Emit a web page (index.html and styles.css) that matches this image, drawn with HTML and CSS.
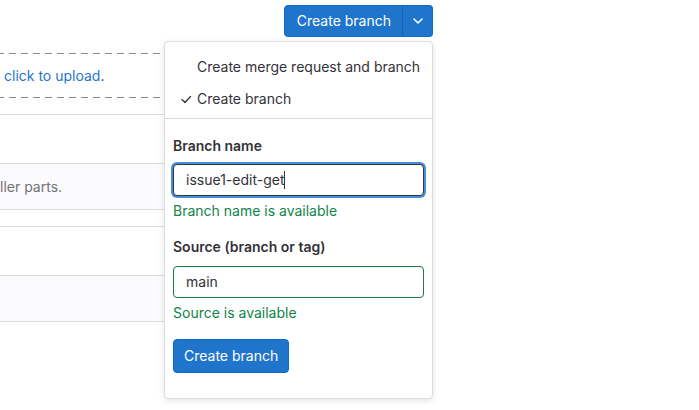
FILE: index.html
```html
<!DOCTYPE html>
<html lang="en">
<head>
<meta charset="utf-8">
<title>Create branch</title>
<link rel="stylesheet" href="styles.css">
</head>
<body>
<div class="page">
  <div class="toolbar">
    <div class="btn-group">
      <button class="btn btn-primary btn-main">Create branch</button>
      <button class="btn btn-primary btn-caret" aria-label="Toggle dropdown">
        <svg width="16" height="16" viewBox="0 0 16 16"><polyline points="4,6 8,10 12,6" fill="none" stroke="#fff" stroke-width="1.6" stroke-linecap="round" stroke-linejoin="round"/></svg>
      </button>
    </div>
  </div>

  <div class="content">
    <div class="dropzone"><span class="link">click to upload</span>.</div>
    <div class="rows">
      <div class="row row-tall"></div>
      <div class="row row-gray"><span class="muted">ller parts.</span></div>
      <div class="row row-short"></div>
      <div class="row row-tall"></div>
      <div class="row row-gray"></div>
      <div class="row row-end"></div>
    </div>
  </div>

  <div class="dropdown">
    <ul class="dropdown-list">
      <li class="dropdown-item"><span class="check-slot"></span>Create merge request and branch</li>
      <li class="dropdown-item"><span class="check-slot"><svg width="16" height="16" viewBox="0 0 16 16"><polyline points="1,8.5 4,11.5 9.5,5.5" fill="none" stroke="#333238" stroke-width="1.3" stroke-linecap="round" stroke-linejoin="round"/></svg></span>Create branch</li>
    </ul>
    <div class="divider"></div>
    <form class="branch-form">
      <div class="form-group">
        <div class="label">Branch name</div>
        <div class="input input-focus">issue1-edit-get<span class="text-caret"></span></div>
        <div class="feedback">Branch name is available</div>
      </div>
      <div class="form-group">
        <div class="label label-second">Source (branch or tag)</div>
        <div class="input input-valid">main</div>
        <div class="feedback">Source is available</div>
      </div>
      <button type="button" class="btn btn-primary btn-submit">Create branch</button>
    </form>
  </div>
</div>
</body>
</html>
```

FILE: styles.css
```css
* { box-sizing: border-box; }
html, body {
  margin: 0;
  padding: 0;
  background: #fff;
}
body {
  font-family: Inter, "Noto Sans", "Liberation Sans", sans-serif;
  font-size: 14px;
  line-height: 20px;
  color: #333238;
  overflow: hidden;
}
.page {
  position: relative;
  width: 699px;
  height: 410px;
}

/* top toolbar */
.toolbar {
  display: flex;
  justify-content: flex-end;
  padding: 5px 266px 0 0;
}
.btn-group {
  display: flex;
}
.btn {
  font-family: inherit;
  font-size: 14px;
  line-height: 20px;
  margin: 0;
  cursor: pointer;
  white-space: nowrap;
}
.btn-primary {
  background: #1f75cb;
  border: 1px solid #1068bf;
  color: #fff;
}
.btn-main {
  height: 32px;
  padding: 0 11px 0 12px;
  border-radius: 4px 0 0 4px;
}
.btn-caret {
  height: 32px;
  width: 31px;
  padding: 0;
  border-left: 1px solid #1462b0;
  border-radius: 0 4px 4px 0;
  display: flex;
  align-items: center;
  justify-content: center;
  margin-left: -1px;
}
.btn-caret svg { display: block; }

/* background content */
.content {
  width: 330px;
  margin-top: 16px;
}
.dropzone {
  height: 45px;
  display: flex;
  align-items: center;
  padding-left: 4px;
  background-image:
    repeating-linear-gradient(to right, #89888d 0 7px, transparent 7px 12px),
    repeating-linear-gradient(to right, #89888d 0 7px, transparent 7px 12px);
  background-size: 100% 1px, 100% 1px;
  background-position: -3px 0, -3px 100%;
  background-repeat: no-repeat;
}
.link { color: #1f75cb; }
.rows { margin-top: 16px; }
.row {
  border-top: 1px solid #dcdcde;
}
.row-tall { height: 49px; }
.row-gray {
  height: 46px;
  background: #fbfafd;
  display: flex;
  align-items: center;
}
.row-short { height: 17px; }
.row-end { height: 1px; }
.muted { color: #737278; }

/* dropdown */
.dropdown {
  position: absolute;
  top: 41px;
  left: 164px;
  width: 269px;
  background: #fff;
  border: 1px solid #dcdcde;
  border-radius: 4px;
  box-shadow: 0 2px 6px rgba(5, 5, 6, 0.1);
}
.dropdown-list {
  list-style: none;
  margin: 0;
  padding: 9px 0 3px;
}
.dropdown-item {
  height: 32px;
  display: flex;
  align-items: center;
  padding-left: 16px;
}
.check-slot {
  width: 16px;
  height: 16px;
  flex: none;
}
.check-slot svg { display: block; }
.divider {
  height: 1px;
  background: #dcdcde;
}
.branch-form {
  padding: 17px 8px 25px;
}
.form-group {
  margin-bottom: 16px;
}
.label {
  font-weight: 600;
  margin-bottom: 8px;
}
.label-second { margin-bottom: 9px; }
.input {
  height: 32px;
  border-radius: 4px;
  padding: 0 12px;
  display: flex;
  align-items: center;
  background: #fff;
}
.input-focus {
  border: 1px solid #333238;
  box-shadow: 0 0 0 2px #428fdc;
}
.input-valid {
  border: 1px solid #217645;
}
.text-caret {
  display: inline-block;
  width: 1px;
  height: 18px;
  background: #333238;
}
.feedback {
  margin-top: 5px;
  color: #108548;
}
.btn-submit {
  height: 34px;
  padding: 0 10px;
  border-radius: 4px;
  border-color: #1068bf;
}
```
